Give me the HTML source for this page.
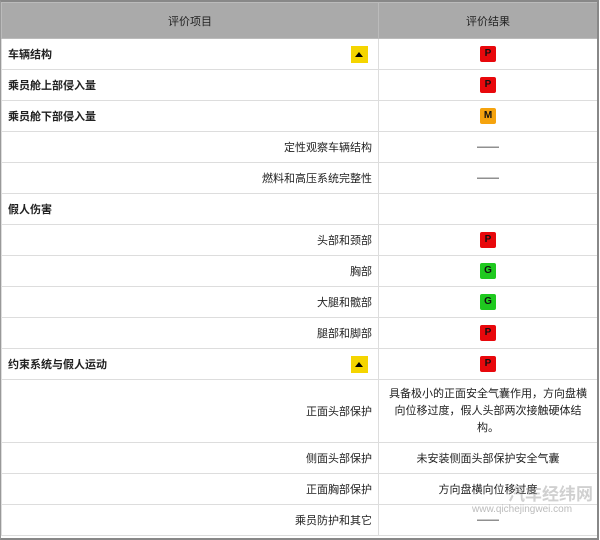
<!DOCTYPE html><html><head><meta charset="utf-8"><style>
body{margin:0;width:600px;height:540px;background:#fff;font-family:"Liberation Sans","Noto Sans CJK SC",sans-serif;font-size:11px;color:#222;position:relative;overflow:hidden}
.frame{position:absolute;left:0;top:0;width:596px;height:536px;border:2px solid #888;border-left:1px solid #999}
table{position:absolute;left:1px;top:2px;border-collapse:collapse;width:597px}
td,th{border:1px solid #ddd;padding:0 6px;height:30px}
th{background:#aaa;font-weight:normal;height:35px;color:#222;border-color:#bbb}
td.l{width:364px}
td.r{text-align:center}
.b{font-weight:bold}
.rt{text-align:right}
.bd{display:inline-block;position:relative;width:16px;height:16px;border-radius:2px;vertical-align:middle}
.bd i{position:absolute;left:0;right:0;top:3px;font:bold 10px/10px "Liberation Sans",sans-serif;text-align:center}
.P{background:#e8080c;color:#111}.G{background:#1fc91f;color:#111}.M{background:#f5a30e;color:#111}
.y{float:right;width:17px;height:17px;background:#f5d500;position:relative;margin-right:4px}
.y:after{content:"";position:absolute;left:4px;top:6px;border-left:4.5px solid transparent;border-right:4.5px solid transparent;border-bottom:5px solid #000}
.wm{position:absolute;left:508px;top:480px;font-size:17px;font-weight:bold;color:rgba(120,120,120,.35);white-space:nowrap}
.wm2{position:absolute;left:472px;top:504px;font-size:10px;color:rgba(120,120,120,.5);white-space:nowrap}
</style></head><body>
<table>
<tr><th>评价项目</th><th>评价结果</th></tr>
<tr><td class="l b">车辆结构<span class="y"></span></td><td class="r"><span class="bd P"><i>P</i></span></td></tr>
<tr><td class="l b">乘员舱上部侵入量</td><td class="r"><span class="bd P"><i>P</i></span></td></tr>
<tr><td class="l b">乘员舱下部侵入量</td><td class="r"><span class="bd M"><i>M</i></span></td></tr>
<tr><td class="l rt">定性观察车辆结构</td><td class="r">——</td></tr>
<tr><td class="l rt">燃料和高压系统完整性</td><td class="r">——</td></tr>
<tr><td class="l b">假人伤害</td><td class="r"></td></tr>
<tr><td class="l rt">头部和颈部</td><td class="r"><span class="bd P"><i>P</i></span></td></tr>
<tr><td class="l rt">胸部</td><td class="r"><span class="bd G"><i>G</i></span></td></tr>
<tr><td class="l rt">大腿和髋部</td><td class="r"><span class="bd G"><i>G</i></span></td></tr>
<tr><td class="l rt">腿部和脚部</td><td class="r"><span class="bd P"><i>P</i></span></td></tr>
<tr><td class="l b">约束系统与假人运动<span class="y"></span></td><td class="r"><span class="bd P"><i>P</i></span></td></tr>
<tr><td class="l rt" style="height:62px">正面头部保护</td><td class="r" style="line-height:17px">具备极小的正面安全气囊作用，方向盘横向位移过度，假人头部两次接触硬体结构。</td></tr>
<tr><td class="l rt">侧面头部保护</td><td class="r">未安装侧面头部保护安全气囊</td></tr>
<tr><td class="l rt">正面胸部保护</td><td class="r">方向盘横向位移过度</td></tr>
<tr><td class="l rt">乘员防护和其它</td><td class="r">——</td></tr>
</table>
<div class="frame"></div>
<div class="wm">汽车经纬网</div>
<div class="wm2">www.qichejingwei.com</div>
</body></html>
